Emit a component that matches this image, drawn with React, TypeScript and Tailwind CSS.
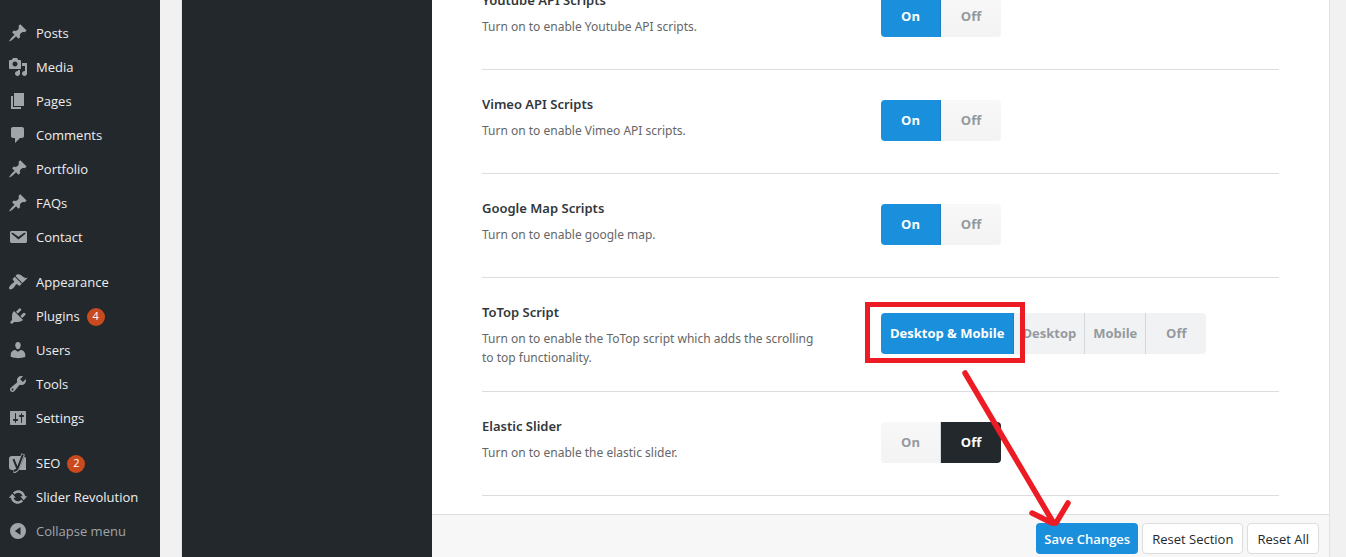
import { useState } from "react";
import type { ReactNode } from "react";
import clsx from "clsx";

const pin =
  "M10.44 3.02l1.82-1.82 6.36 6.35-1.83 1.82c-1.05-.68-2.48-.57-3.41.36l-.75.75c-.92.93-1.04 2.35-.35 3.41l-1.83 1.82-2.41-2.41-2.8 2.79c-.42.42-3.38 2.71-3.8 2.29s1.86-3.39 2.28-3.81l2.79-2.79L4.1 9.36l1.83-1.82c1.05.69 2.48.57 3.4-.36l.75-.75c.93-.92 1.05-2.35.36-3.41z";
const media =
  "M13 11V4c0-.55-.45-1-1-1h-1.67L9 1H5L3.67 3H2c-.55 0-1 .45-1 1v7c0 .55.45 1 1 1h10c.55 0 1-.45 1-1zM7 4.5c1.38 0 2.5 1.12 2.5 2.5S8.38 9.5 7 9.5 4.5 8.38 4.5 7 5.62 4.5 7 4.5zM14 6h5v10.5c0 1.38-1.12 2.5-2.5 2.5S14 17.88 14 16.5s1.12-2.5 2.5-2.5c.17 0 .34.02.5.05V9h-3V6zm-4 8.05V13h2v3.5c0 1.38-1.12 2.5-2.5 2.5S7 17.88 7 16.5 8.12 14 9.5 14c.17 0 .34.02.5.05z";
const pages = "M6 15V2h10v13H6zm-1 1h8v2H3V5h2v11z";
const comments =
  "M5 2h9c1.1 0 2 .9 2 2v7c0 1.1-.9 2-2 2h-2l-5 5v-5H5c-1.1 0-2-.9-2-2V4c0-1.1.9-2 2-2z";
const mail =
  "M3.87 4h13.25C18.37 4 19 4.59 19 5.79v8.42c0 1.19-.63 1.79-1.88 1.79H3.87c-1.25 0-1.88-.6-1.88-1.79V5.79c0-1.2.63-1.79 1.88-1.79zm6.62 8.6l6.74-5.53c.24-.2.43-.66.13-1.07-.29-.41-.82-.42-1.17-.17l-5.7 3.86L4.8 5.83c-.35-.25-.88-.24-1.17.17-.3.41-.11.87.13 1.07z";
const brush =
  "M14.48 11.06L7.41 3.99l1.5-1.5c.5-.56 2.3-.47 3.51.32 1.21.8 1.43 1.28 2.91 2.1 1.18.64 2.45 1.26 4.45.85zm-.71.71L6.7 4.7 4.93 6.47c-.39.39-.39 1.02 0 1.41l1.06 1.06c.39.39.39 1.03 0 1.42-.6.6-1.43 1.11-2.21 1.69-.35.26-.7.53-1.01.84C1.43 14.23.4 16.08 1.4 17.07c.99 1 2.84-.03 4.18-1.36.31-.31.58-.66.85-1.02.57-.78 1.08-1.61 1.69-2.21.39-.39 1.02-.39 1.41 0l1.06 1.06c.39.39 1.02.39 1.41 0z";
const plug =
  "M13.11 4.36L9.87 7.6 8 5.73l3.24-3.24c.35-.34 1.05-.2 1.56.32.52.51.66 1.21.31 1.55zm-8 1.77l.91-1.12 9.01 9.01-1.19.84c-.71.71-2.63 1.16-3.82 1.16H6.14L4.9 17.26c-.59.59-1.54.59-2.12 0-.59-.58-.59-1.53 0-2.12l1.24-1.24v-3.88c0-1.13.4-3.19 1.09-3.89zm7.26 3.97l3.24-3.24c.34-.35 1.04-.21 1.55.31.52.51.66 1.21.31 1.55l-3.24 3.25z";
const user =
  "M10 9.25c-2.27 0-2.73-3.44-2.73-3.44C7 4.02 7.82 2 9.97 2c2.16 0 2.98 2.02 2.71 3.81 0 0-.41 3.44-2.68 3.44zm0 2.57L12.72 10c2.39 0 4.52 2.33 4.52 4.53v2.49s-3.65 1.13-7.24 1.13c-3.65 0-7.24-1.13-7.24-1.13v-2.49c0-2.25 1.94-4.48 4.47-4.48z";
const wrench =
  "M16.68 9.77c-1.34 1.34-3.3 1.67-4.95.99l-5.41 6.52c-.99.99-2.59.99-3.58 0s-.99-2.59 0-3.57l6.52-5.42c-.68-1.65-.35-3.61.99-4.95 1.28-1.28 3.12-1.62 4.72-1.06l-2.89 2.89 2.82 2.82 2.86-2.87c.53 1.58.18 3.39-1.08 4.65zM3.81 16.21c.4.39 1.04.39 1.43 0 .4-.4.4-1.04 0-1.43-.39-.4-1.03-.4-1.43 0-.39.39-.39 1.03 0 1.43z";
const sliders =
  "M18 16V4c0-.55-.45-1-1-1H3c-.55 0-1 .45-1 1v12c0 .55.45 1 1 1h14c.55 0 1-.45 1-1zM8 11h1c.55 0 1 .45 1 1s-.45 1-1 1H8v1.5c0 .28-.22.5-.5.5s-.5-.22-.5-.5V13H6c-.55 0-1-.45-1-1s.45-1 1-1h1V5.5c0-.28.22-.5.5-.5s.5.22.5.5V11zm5-2h-1c-.55 0-1-.45-1-1s.45-1 1-1h1V5.5c0-.28.22-.5.5-.5s.5.22.5.5V7h1c.55 0 1 .45 1 1s-.45 1-1 1h-1v5.5c0 .28-.22.5-.5.5s-.5-.22-.5-.5V9z";
const update =
  "M10.2 3.28c3.53 0 6.43 2.61 6.92 6h2.08l-3.5 4-3.5-4h2.32c-.45-1.97-2.21-3.45-4.32-3.45-1.45 0-2.73.71-3.54 1.78L4.95 5.66C6.23 4.2 8.11 3.28 10.2 3.28zm-.4 13.44c-3.52 0-6.43-2.61-6.92-6H.8l3.5-4c1.17 1.33 2.33 2.67 3.5 4H5.48c.45 1.97 2.21 3.45 4.32 3.45 1.45 0 2.73-.71 3.54-1.78l1.71 1.95c-1.28 1.46-3.15 2.38-5.25 2.38z";
const collapse = "M10 2a8 8 0 1 0 0 16 8 8 0 0 0 0-16zM12.5 6v8L6.8 10z";

function Glyph({ d }: { d: string }) {
  return (
    <svg viewBox="0 0 20 20" className="size-5 shrink-0 fill-[#a0a5aa]" fillRule="evenodd" aria-hidden="true">
      <path d={d} />
    </svg>
  );
}

function YoastGlyph() {
  return (
    <svg viewBox="0 0 20 20" className="size-5 shrink-0" aria-hidden="true">
      <path className="fill-[#a0a5aa]" d="M4 3h10.6L9.8 17H4a3 3 0 0 1-3-3V6a3 3 0 0 1 3-3z M16.4 3.4c1.1.5 1.6 1.4 1.6 2.6v11h-6.9z" />
      <path className="fill-none stroke-[#a0a5aa]" strokeWidth="3.6" d="M15.2.8 10.2 14.6c-.9 2.3-2.2 3.8-4.8 4" />
      <path className="fill-none stroke-[#23282d]" strokeWidth="2" d="M5.4 6.2 8.9 14.6M14.9 1.5 10 14.4c-.8 2-2 3.3-4.2 3.5" />
    </svg>
  );
}

type Item = { label: string; icon: ReactNode; count?: number };

const groups: Item[][] = [
  [
    { label: "Posts", icon: <Glyph d={pin} /> },
    { label: "Media", icon: <Glyph d={media} /> },
    { label: "Pages", icon: <Glyph d={pages} /> },
    { label: "Comments", icon: <Glyph d={comments} /> },
    { label: "Portfolio", icon: <Glyph d={pin} /> },
    { label: "FAQs", icon: <Glyph d={pin} /> },
    { label: "Contact", icon: <Glyph d={mail} /> },
  ],
  [
    { label: "Appearance", icon: <Glyph d={brush} /> },
    { label: "Plugins", icon: <Glyph d={plug} />, count: 4 },
    { label: "Users", icon: <Glyph d={user} /> },
    { label: "Tools", icon: <Glyph d={wrench} /> },
    { label: "Settings", icon: <Glyph d={sliders} /> },
  ],
  [
    { label: "SEO", icon: <YoastGlyph />, count: 2 },
    { label: "Slider Revolution", icon: <Glyph d={update} /> },
  ],
];

function Sidebar() {
  return (
    <nav className="w-40 shrink-0 overflow-hidden bg-[#23282d] pt-4 text-[13px] text-[#eee]">
      {groups.map((group, i) => (
        <ul key={i} className="mb-[11px] last-of-type:mb-0">
          {group.map((item) => (
            <li key={item.label}>
              <a href="#" className="flex h-[34px] items-center gap-2 pl-2 whitespace-nowrap">
                {item.icon}
                <span className="flex items-center gap-[7px] pt-px">
                  {item.label}
                  {item.count !== undefined && (
                    <span className="flex size-[18px] items-center justify-center rounded-full bg-[#ca4a1f] text-[11px] text-white">
                      {item.count}
                    </span>
                  )}
                </span>
              </a>
            </li>
          ))}
        </ul>
      ))}
      <button type="button" className="flex h-[34px] items-center gap-2 pl-2 whitespace-nowrap text-[#a0a5aa]">
        <Glyph d={collapse} />
        <span className="pt-px">Collapse menu</span>
      </button>
    </nav>
  );
}

type Setting = {
  title: string;
  text: string;
  options: string[];
  initial: string;
  marked?: boolean;
};

const settings: Setting[] = [
  { title: "Youtube API Scripts", text: "Turn on to enable Youtube API scripts.", options: ["On", "Off"], initial: "On" },
  { title: "Vimeo API Scripts", text: "Turn on to enable Vimeo API scripts.", options: ["On", "Off"], initial: "On" },
  { title: "Google Map Scripts", text: "Turn on to enable google map.", options: ["On", "Off"], initial: "On" },
  {
    title: "ToTop Script",
    text: "Turn on to enable the ToTop script which adds the scrolling to top functionality.",
    options: ["Desktop & Mobile", "Desktop", "Mobile", "Off"],
    initial: "Desktop & Mobile",
    marked: true,
  },
  { title: "Elastic Slider", text: "Turn on to enable the elastic slider.", options: ["On", "Off"], initial: "Off" },
];

function SettingRow({ title, text, options, initial, marked }: Setting) {
  const [value, setValue] = useState(initial);
  return (
    <section className="grid shrink-0 grid-cols-[399px_1fr] border-b border-[#dcdddf] pt-[25px] pb-6">
      <div className="min-h-[54px] pr-[56px] font-['Noto_Sans','Open_Sans',sans-serif]">
        <h3 className="mb-[7px] text-[13px] leading-[19px] font-semibold text-[#32373c]">{title}</h3>
        <p className="text-[12px] leading-[19px] text-[#666]">{text}</p>
      </div>
      <div className="flex items-center pb-[3px]">
        <div className="relative">
          <div role="group" aria-label={title} className="flex h-[41px]">
            {options.map((option) => {
              const active = option === value;
              return (
                <button
                  key={option}
                  type="button"
                  aria-pressed={active}
                  onClick={() => setValue(option)}
                  className={clsx(
                    "min-w-[60px] border-r text-[13px] font-bold whitespace-nowrap first:rounded-l last:rounded-r last:border-r-0",
                    active ? "px-[9px]" : "px-2 text-[#949a9f]",
                    !active && (marked ? "border-[#d5d8db] bg-[#f1f2f4]" : "border-[#d5d8db] bg-linear-to-b from-[#f8f8f8] to-[#f3f3f3]"),
                    active && option === "Off" && "border-[#23282d] bg-[#23282d] text-white",
                    active && option !== "Off" && "border-[#1a7fc3] bg-[#1a8fdc] text-white",
                  )}
                >
                  {option}
                </button>
              );
            })}
          </div>
          {marked && (
            <span className="pointer-events-none absolute -top-[11px] -left-4 h-[61px] w-40 border-5 border-[#ed1c24]" />
          )}
        </div>
      </div>
    </section>
  );
}

export default function App() {
  return (
    <div className="flex h-screen overflow-hidden bg-[#f1f1f1] font-['Open_Sans','Noto_Sans',sans-serif]">
      <Sidebar />
      <main className="mr-4 ml-[21px] flex min-w-0 flex-1 border-x border-[#e2e2e2] bg-white">
        <div className="w-[250px] shrink-0 bg-[#23282d]" />
        <div className="relative flex min-w-0 flex-1 flex-col">
          <div className="flex min-h-0 flex-1 flex-col justify-end overflow-hidden px-[50px] pb-[18px]">
            {settings.map((setting) => (
              <SettingRow key={setting.title} {...setting} />
            ))}
          </div>
          <footer className="flex justify-end gap-1 border-t border-[#dcdddf] bg-[#f7f7f7] pt-2 pr-[10px] pb-[3px] text-[13px] text-[#23282d]">
            <button type="button" className="h-[31px] rounded bg-[#1a8fdc] px-2 pt-0.5 font-semibold text-white">
              Save Changes
            </button>
            <button type="button" className="h-[31px] rounded border border-[#dcdddf] bg-white px-[9px] pt-0.5">
              Reset Section
            </button>
            <button type="button" className="h-[31px] rounded border border-[#dcdddf] bg-white px-[9px] pt-0.5">
              Reset All
            </button>
          </footer>
          <svg
            viewBox="0 0 120 165"
            className="pointer-events-none absolute bottom-[27px] left-[523px] h-[165px] w-[120px] fill-none stroke-[#ed1c24]"
            strokeWidth="5.5"
            strokeLinecap="round"
            strokeLinejoin="round"
            aria-hidden="true"
          >
            <path d="M10 8 98 157M77 148l20 10h4l12-20" />
          </svg>
        </div>
      </main>
    </div>
  );
}
